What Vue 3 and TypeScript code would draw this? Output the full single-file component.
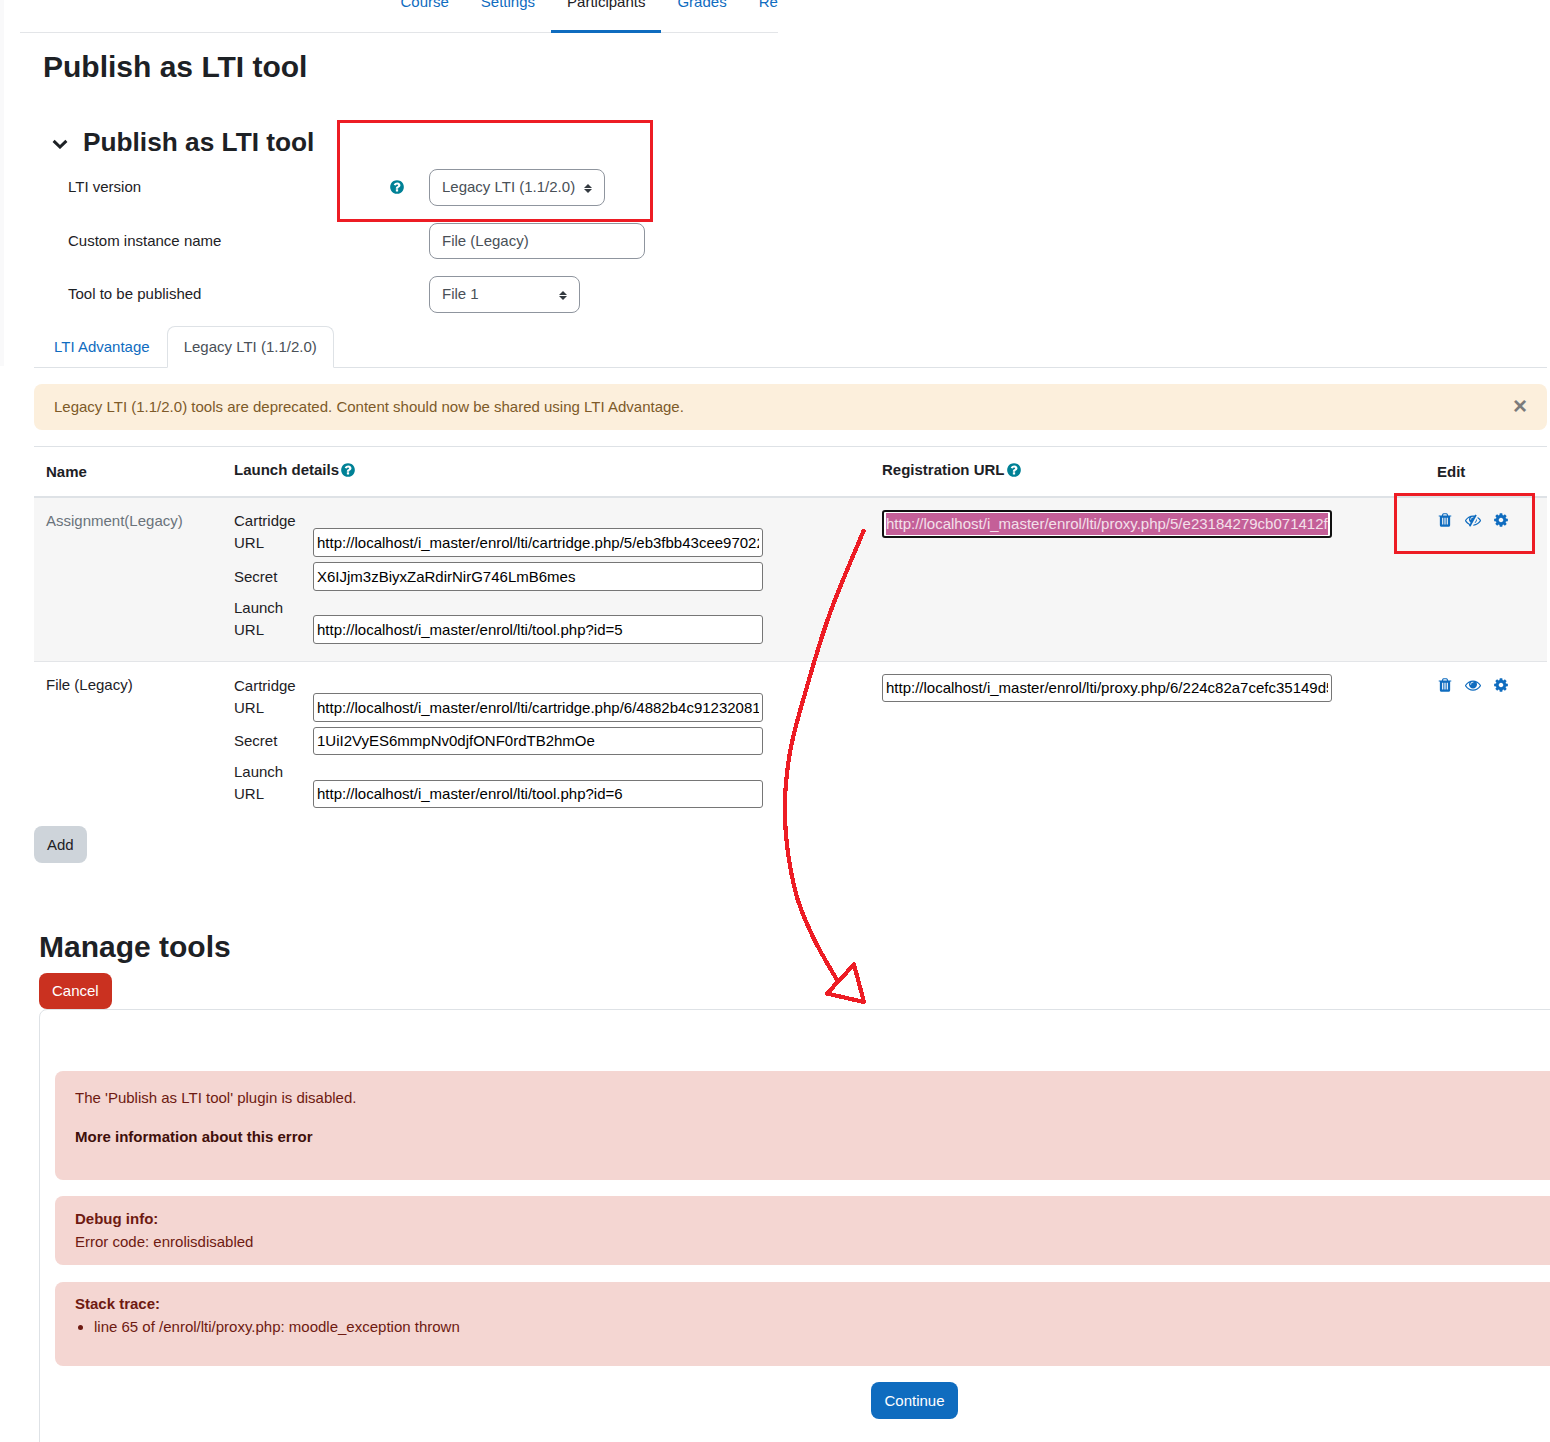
<script setup lang="ts">
interface ToolRow {
  name: string
  muted: boolean
  cartridge: string
  secret: string
  launch: string
  registration: string
  hidden: boolean
}

const rows: ToolRow[] = [
  {
    name: 'Assignment(Legacy)',
    muted: true,
    cartridge: 'http://localhost/i_master/enrol/lti/cartridge.php/5/eb3fbb43cee97022a1c4f7/cartridge.xml',
    secret: 'X6IJjm3zBiyxZaRdirNirG746LmB6mes',
    launch: 'http://localhost/i_master/enrol/lti/tool.php?id=5',
    registration: 'http://localhost/i_master/enrol/lti/proxy.php/5/e23184279cb071412f5a9c',
    hidden: true,
  },
  {
    name: 'File (Legacy)',
    muted: false,
    cartridge: 'http://localhost/i_master/enrol/lti/cartridge.php/6/4882b4c91232081a7d3e91/cartridge.xml',
    secret: '1UiI2VyES6mmpNv0djfONF0rdTB2hmOe',
    launch: 'http://localhost/i_master/enrol/lti/tool.php?id=6',
    registration: 'http://localhost/i_master/enrol/lti/proxy.php/6/224c82a7cefc35149d5e0b',
    hidden: false,
  },
]

const navItems = ['Course', 'Settings', 'Participants', 'Grades', 'Reports']

const helpPath =
  'M1024 1376v-192q0-14-9-23t-23-9h-192q-14 0-23 9t-9 23v192q0 14 9 23t23 9h192q14 0 23-9t9-23zm256-672q0-88-55.5-163t-138.5-116-170-41q-243 0-371 213-15 24 8 42l132 100q7 6 19 6 16 0 25-12 53-68 86-92 34-24 86-24 48 0 85.5 26t37.5 59q0 38-20 61t-68 45q-63 28-115.5 86.5t-52.5 125.5v36q0 14 9 23t23 9h192q14 0 23-9t9-23q0-19 21.5-49.5t54.5-49.5q32-18 49-28.5t46-35 44.5-48 28-60.5 12.5-81zm384 192q0 209-103 385.5t-279.5 279.5-385.5 103-385.5-103-279.5-279.5-103-385.5 103-385.5 279.5-279.5 385.5-103 385.5 103 279.5 279.5 103 385.5z'
const trashPath =
  'M704 1376v-704q0-14-9-23t-23-9h-64q-14 0-23 9t-9 23v704q0 14 9 23t23 9h64q14 0 23-9t9-23zm256 0v-704q0-14-9-23t-23-9h-64q-14 0-23 9t-9 23v704q0 14 9 23t23 9h64q14 0 23-9t9-23zm256 0v-704q0-14-9-23t-23-9h-64q-14 0-23 9t-9 23v704q0 14 9 23t23 9h64q14 0 23-9t9-23zm-544-992h448l-48-117q-7-9-17-11h-317q-10 2-17 11zm928 32v64q0 14-9 23t-23 9h-96v948q0 83-47 143.5t-113 60.5h-832q-66 0-113-58.5t-47-141.5v-952h-96q-14 0-23-9t-9-23v-64q0-14 9-23t23-9h309l70-167q15-37 54-63t79-26h320q40 0 79 26t54 63l70 167h309q14 0 23 9t9 23z'
const eyePath =
  'M1664 960q-152-236-381-353 61 104 61 225 0 185-131.5 316.5t-316.5 131.5-316.5-131.5-131.5-316.5q0-121 61-225-229 117-381 353 133 205 333.5 326.5t434.5 121.5 434.5-121.5 333.5-326.5zm-720-384q0-20-14-34t-34-14q-125 0-214.5 89.5t-89.5 214.5q0 20 14 34t34 14 34-14 14-34q0-86 61-147t147-61q20 0 34-14t14-34zm848 384q0 34-20 69-140 230-376.5 368.5t-499.5 138.5-499.5-139-376.5-368q-20-35-20-69t20-69q140-229 376.5-368t499.5-139 499.5 139 376.5 368q20 35 20 69z'
const eyeSlashPath =
  'M555 1335l78-141q-87-63-136-159t-49-203q0-121 61-225-229 117-381 353 167 258 427 375zm389-759q0-20-14-34t-34-14q-125 0-214.5 89.5t-89.5 214.5q0 20 14 34t34 14 34-14 14-34q0-86 61-147t147-61q20 0 34-14t14-34zm363-191q0 7-1 9-105 188-315 566t-316 567l-49 89q-10 16-28 16-12 0-134-70-16-10-16-28 0-12 44-87-143-65-263.5-173t-208.5-245q-20-31-20-69t20-69q153-235 380-371t496-136q89 0 180 17l54-97q10-16 28-16 5 0 18 6t31 15.5 33 18.5 31.5 18.5 19.5 11.5q16 10 16 27zm37 447q0 139-79 253.5t-209 164.5l280-502q8 45 8 84zm448 128q0 35-20 69-39 64-109 145-150 172-347.5 267t-419.5 95l74-132q212-18 392.5-137t301.5-307q-115-179-282-294l63-112q95 64 182.5 153t144.5 184q20 34 20 69z'
const cogPath =
  'M1152 896q0-106-75-181t-181-75-181 75-75 181 75 181 181 75 181-75 75-181zm512-109v222q0 12-8 23t-20 13l-185 28q-19 54-39 91 35 50 107 138 10 12 10 25t-9 23q-27 37-99 108t-94 71q-12 0-26-9l-138-108q-44 23-91 38-16 136-29 186-7 28-36 28h-222q-14 0-24.5-8.5t-11.5-21.5l-28-184q-49-16-90-37l-141 107q-10 9-25 9-14 0-25-11-126-114-165-168-7-10-7-23 0-12 8-23 15-21 51-66.5t54-70.5q-27-50-41-99l-183-27q-13-2-21-12.5t-8-23.5v-222q0-12 8-23t19-13l186-28q14-46 39-92-40-57-107-138-10-12-10-24 0-10 9-23 26-36 98.5-107.5t94.5-71.5q13 0 26 10l138 107q44-23 91-38 16-136 29-186 7-28 36-28h222q14 0 24.5 8.5t11.5 21.5l28 184q49 16 90 37l142-107q9-9 24-9 13 0 25 10 129 119 165 170 7 8 7 22 0 12-8 23-15 21-51 66.5t-54 70.5q26 50 41 98l183 28q13 2 21 12.5t8 23.5z'
</script>

<template>
  <div class="page">
    <span class="edge-strip"></span>

    <nav class="course-nav">
      <a v-for="item in navItems" :key="item" class="course-link" :class="{ active: item === 'Participants' }">{{ item }}</a>
    </nav>

    <h2 class="page-title">Publish as LTI tool</h2>

    <section class="publish">
      <h3 class="section-title">
        <svg class="chevron" viewBox="0 0 16 10" aria-hidden="true">
          <path d="M1.6 1.8l6.4 6.2 6.4-6.2" fill="none" stroke="#1d2125" stroke-width="3" />
        </svg>
        Publish as LTI tool
      </h3>

      <div class="form-grid">
        <div class="form-label">
          <span>LTI version</span>
          <svg class="help-icon form-help" viewBox="0 0 1792 1792" aria-hidden="true"><path :d="helpPath" /></svg>
        </div>
        <div class="field select select-version">
          <span>Legacy LTI (1.1/2.0)</span>
          <span class="updown"></span>
        </div>

        <div class="form-label"><span>Custom instance name</span></div>
        <div class="field text-field">File (Legacy)</div>

        <div class="form-label"><span>Tool to be published</span></div>
        <div class="field select select-tool">
          <span>File 1</span>
          <span class="updown"></span>
        </div>
      </div>
    </section>

    <div class="content">
      <div class="tabs">
        <a class="tab">LTI Advantage</a>
        <a class="tab tab-active">Legacy LTI (1.1/2.0)</a>
      </div>

      <div class="notice">
        <span>Legacy LTI (1.1/2.0) tools are deprecated. Content should now be shared using LTI Advantage.</span>
        <span class="notice-close">×</span>
      </div>

      <table class="tools">
        <colgroup>
          <col class="col-name" />
          <col class="col-launch" />
          <col class="col-reg" />
          <col class="col-edit" />
        </colgroup>
        <thead>
          <tr>
            <th class="th-low">Name</th>
            <th>
              Launch details<svg class="help-icon" viewBox="0 0 1792 1792" aria-hidden="true"><path :d="helpPath" /></svg>
            </th>
            <th>
              Registration URL<svg class="help-icon" viewBox="0 0 1792 1792" aria-hidden="true"><path :d="helpPath" /></svg>
            </th>
            <th class="th-low">Edit</th>
          </tr>
        </thead>
        <tbody>
          <tr v-for="(row, i) in rows" :key="row.name" :class="{ shaded: i === 0 }">
            <td :class="{ muted: row.muted }">{{ row.name }}</td>
            <td>
              <div class="launch-grid" :class="{ 'grid-first': i === 0 }">
                <span class="launch-label">Cartridge URL</span>
                <input class="plain-input" type="text" readonly :value="row.cartridge" />
                <span class="launch-label">Secret</span>
                <input class="plain-input" type="text" readonly :value="row.secret" />
                <span class="launch-label">Launch URL</span>
                <input class="plain-input" type="text" readonly :value="row.launch" />
              </div>
            </td>
            <td>
              <input
                class="plain-input reg-input"
                :class="{ 'reg-focused': i === 0 }"
                type="text"
                readonly
                :value="row.registration"
              />
            </td>
            <td>
              <div class="actions">
                <svg class="action" viewBox="0 0 1792 1792" aria-hidden="true"><path :d="trashPath" /></svg>
                <svg class="action" viewBox="0 0 1792 1792" aria-hidden="true"><path :d="row.hidden ? eyeSlashPath : eyePath" /></svg>
                <svg class="action" viewBox="0 0 1792 1792" aria-hidden="true"><path :d="cogPath" /></svg>
              </div>
            </td>
          </tr>
        </tbody>
      </table>

      <button class="btn btn-grey" type="button">Add</button>
    </div>

    <section class="manage">
      <h2 class="page-title manage-title">Manage tools</h2>
      <button class="btn btn-red" type="button">Cancel</button>

      <div class="card">
        <div class="danger danger-main">
          <p>The 'Publish as LTI tool' plugin is disabled.</p>
          <p><strong>More information about this error</strong></p>
        </div>
        <div class="danger danger-small">
          <strong>Debug info:</strong>
          <div>Error code: enrolisdisabled</div>
        </div>
        <div class="danger danger-small danger-trace">
          <strong>Stack trace:</strong>
          <ul>
            <li>line 65 of /enrol/lti/proxy.php: moodle_exception thrown</li>
          </ul>
        </div>
        <div class="continue-row">
          <button class="btn btn-blue" type="button">Continue</button>
        </div>
      </div>
    </section>

    <svg class="annotations" viewBox="0 0 1550 1442" aria-hidden="true">
      <rect x="338.5" y="121.5" width="313" height="99" fill="none" stroke="#ed1c24" stroke-width="3" />
      <rect x="1395.5" y="494.5" width="138" height="58" fill="none" stroke="#ed1c24" stroke-width="3" />
      <path
        class="crisp"
        d="M863.5 531 C857.9 544.7 839.6 586.5 830 613 C820.4 639.5 812.75 666.3 806 690 C799.25 713.7 793 733.3 789.5 755 C786 776.7 784.1 797.5 785 820 C785.9 842.5 790.3 870.5 795 890 C799.7 909.5 806 922 813 937 C820 952 833 972.8 837 980"
        fill="none"
        stroke="#ed1c24"
        stroke-width="4.2"
        stroke-linecap="round"
      />
      <path class="crisp" d="M854 964.5 L864 1002 L827 993.5 Z" fill="none" stroke="#ed1c24" stroke-width="4.2" stroke-linejoin="round" />
    </svg>
  </div>
</template>

<style scoped>
.page {
  position: relative;
  width: 1550px;
  height: 1442px;
  overflow: hidden;
  background: #fff;
  color: #1d2125;
  font-family: 'Liberation Sans', Arial, sans-serif;
  font-size: 15px;
  line-height: 22.5px;
}

.edge-strip {
  position: absolute;
  left: 0;
  top: 0;
  width: 4px;
  height: 366px;
  background: #f9f9fa;
}

.course-nav {
  display: flex;
  margin-left: 20px;
  width: 758px;
  height: 33px;
  padding-left: 364px;
  box-sizing: border-box;
  box-shadow: inset 0 -1px 0 #e3e5e8;
  overflow: hidden;
}

.course-link {
  flex: none;
  box-sizing: border-box;
  margin-top: -9px;
  height: 42px;
  padding: 0 15.5px 0 16.5px;
  color: #0f6cbf;
}

.course-link.active {
  color: #1d2125;
  border-bottom: 3px solid #0f6cbf;
}

.page-title {
  margin: 16px 0 0 43px;
  font-size: 30px;
  line-height: 36px;
  font-weight: 700;
}

.publish {
  margin-top: 41px;
}

.section-title {
  display: flex;
  align-items: center;
  margin: 0 0 0 52px;
  height: 32px;
  font-size: 26.25px;
  line-height: 32px;
  font-weight: 700;
}

.chevron {
  width: 16px;
  height: 10px;
  margin-right: 15px;
  margin-top: 4px;
}

.form-grid {
  display: grid;
  grid-template-columns: 361px auto;
  justify-content: start;
  justify-items: start;
  row-gap: 17px;
  margin: 11px 0 0 68px;
}

.form-label {
  width: 337px;
  display: flex;
  align-items: center;
  justify-content: space-between;
  box-sizing: border-box;
}

.help-icon {
  width: 16px;
  height: 16px;
  fill: #008196;
  vertical-align: -3px;
  margin-left: 1px;
}

.form-help {
  margin-left: 0;
  margin-bottom: 1px;
}

.field {
  box-sizing: border-box;
  display: flex;
  align-items: center;
  padding: 0 12px;
  border: 1px solid #8f959e;
  border-radius: 8px;
  color: #495057;
  background: #fff;
}

.select {
  height: 37px;
  justify-content: space-between;
}

.select-version {
  width: 176px;
}

.select-tool {
  width: 151px;
}

.text-field {
  width: 216px;
  height: 36px;
}

.updown {
  position: relative;
  display: block;
  width: 8px;
  height: 9px;
  margin-right: 0;
  margin-top: 1px;
}

.updown::before,
.updown::after {
  content: '';
  position: absolute;
  left: 0;
  border-left: 4px solid transparent;
  border-right: 4px solid transparent;
}

.updown::before {
  top: 0;
  border-bottom: 4px solid #343a40;
}

.updown::after {
  bottom: 0;
  border-top: 4px solid #343a40;
}

.content {
  margin: 13px 0 0 34px;
  width: 1513px;
}

.tabs {
  display: flex;
  align-items: flex-end;
  height: 42px;
  box-sizing: border-box;
  padding-left: 2px;
  border-bottom: 1px solid #dee2e6;
}

.tab {
  box-sizing: border-box;
  height: 42px;
  padding: 9px 16px 0 17px;
  color: #0f6cbf;
  border: 1px solid transparent;
  border-radius: 8px 8px 0 0;
  margin-bottom: -1px;
}

.tab-active {
  padding: 9px 16px 0;
  color: #495057;
  background: #fff;
  border-color: #dee2e6 #dee2e6 #fff;
}

.notice {
  display: flex;
  align-items: center;
  justify-content: space-between;
  height: 46px;
  box-sizing: border-box;
  margin-top: 16px;
  padding: 0 20px;
  background: #fcefdc;
  color: #7d5a29;
  border-radius: 8px;
}

.notice-close {
  font-size: 24px;
  font-weight: 700;
  color: #7b7b7b;
  margin-bottom: 1px;
}

.tools {
  width: 100%;
  margin-top: 16px;
  table-layout: fixed;
  border-collapse: collapse;
}

.col-name {
  width: 188px;
}

.col-launch {
  width: 648px;
}

.col-reg {
  width: 555px;
}

.col-edit {
  width: 122px;
}

.tools th {
  height: 50px;
  box-sizing: border-box;
  padding: 0 12px 14px;
  text-align: left;
  font-weight: 700;
  vertical-align: bottom;
  border-top: 1px solid #dee2e6;
  border-bottom: 2px solid #dee2e6;
}

.tools th.th-low {
  padding-bottom: 12px;
}

.tools td {
  padding: 12px 12px 17px;
  vertical-align: top;
}

.tools tbody tr:first-child td {
  border-bottom: 1px solid #e3e5e8;
}

.tools tbody tr:last-child td {
  padding-bottom: 6px;
}

.shaded {
  background: #f6f6f6;
}

.muted {
  color: #6a737b;
}

.launch-grid {
  display: grid;
  grid-template-columns: 79px 450px;
  grid-template-rows: 48px 28.5px 48px;
  row-gap: 5px;
}

.grid-first {
  margin-top: -0.5px;
  grid-template-rows: 47.5px 28.5px 47.5px;
  row-gap: 5.5px;
}

.launch-label {
  align-self: end;
  padding-right: 12px;
  padding-bottom: 3px;
  line-height: 22px;
}

.plain-input {
  box-sizing: border-box;
  width: 100%;
  height: 28.5px;
  padding: 0 3px;
  align-self: end;
  border: 1px solid #767676;
  border-radius: 3px;
  outline: none;
  background: #fff;
  color: #000;
  font-family: 'Liberation Sans', Arial, sans-serif;
  font-size: 15px;
}

.reg-input {
  display: block;
  width: 450px;
}

.reg-focused {
  height: 28px;
  padding: 1px 2px;
  border: 2px solid #101010;
  background: linear-gradient(#c45f98, #c45f98) content-box, #fff;
  color: #f3e0ea;
}

.actions {
  display: flex;
  gap: 12px;
  margin-top: 2.5px;
}

.tools tbody tr:last-child .actions {
  margin-top: 3.5px;
}

.action {
  width: 16px;
  height: 16px;
  fill: #0f6cbf;
}

.btn {
  display: block;
  box-sizing: border-box;
  height: 36.5px;
  padding: 0 13px;
  border: 0;
  border-radius: 8px;
  font-family: 'Liberation Sans', Arial, sans-serif;
  font-size: 15px;
}

.btn-grey {
  margin-top: 12px;
  background: #ced4da;
  color: #1d2125;
}

.btn-red {
  height: 36px;
  background: #ca3120;
  color: #fff;
}

.btn-blue {
  background: #0f6cbf;
  color: #fff;
}

.manage {
  margin: 66px 0 0 39px;
}

.manage-title {
  margin: 0 0 8px;
}

.card {
  width: 1751px;
  height: 600px;
  box-sizing: border-box;
  padding: 61px 15px 0;
  border: 1px solid #dee2e6;
  border-radius: 8px;
}

.danger {
  box-sizing: border-box;
  padding: 16px 20px;
  margin-bottom: 16px;
  background: #f4d6d2;
  color: #6e1a11;
  border-radius: 8px;
}

.danger p {
  margin: 0 0 16.5px;
}

.danger p:last-child {
  margin-bottom: 15.5px;
}

.danger p strong {
  color: #3f0f0a;
}

.danger-small {
  padding: 11px 20px 12px;
  margin-bottom: 17px;
  line-height: 23px;
}

.danger-trace {
  padding-top: 10px;
}

.danger-trace ul {
  margin: 0 0 16px;
  padding-left: 19px;
}

.continue-row {
  display: flex;
  justify-content: center;
  margin-top: -0.5px;
}

.annotations {
  position: absolute;
  left: 0;
  top: 0;
  width: 1550px;
  height: 1442px;
  pointer-events: none;
}

.crisp {
  shape-rendering: crispEdges;
}
</style>
